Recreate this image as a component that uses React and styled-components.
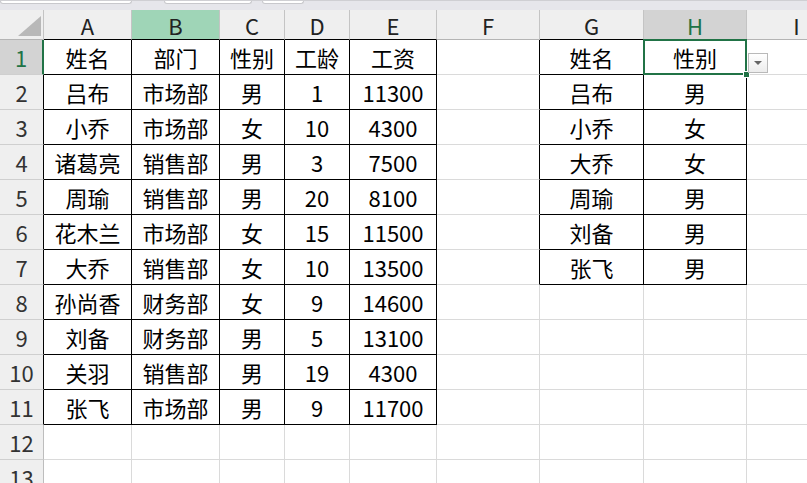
import styled, { createGlobalStyle } from "styled-components";

const GlobalStyle = createGlobalStyle`
  html, body {
    margin: 0;
    padding: 0;
    background: #fff;
    overflow: hidden;
  }
  body {
    font-family: "Noto Sans CJK SC", "Noto Sans", sans-serif;
  }
`;

const COLS = ["A", "B", "C", "D", "E", "F", "G", "H", "I"];
const WIDTHS = [88, 88, 65, 65, 87, 103, 104, 103, 100];
const GREEN = "#217346";
const GRID = "#dadada";

const main = [
  ["姓名", "部门", "性别", "工龄", "工资"],
  ["吕布", "市场部", "男", "1", "11300"],
  ["小乔", "市场部", "女", "10", "4300"],
  ["诸葛亮", "销售部", "男", "3", "7500"],
  ["周瑜", "销售部", "男", "20", "8100"],
  ["花木兰", "市场部", "女", "15", "11500"],
  ["大乔", "销售部", "女", "10", "13500"],
  ["孙尚香", "财务部", "女", "9", "14600"],
  ["刘备", "财务部", "男", "5", "13100"],
  ["关羽", "销售部", "男", "19", "4300"],
  ["张飞", "市场部", "男", "9", "11700"],
];

const lookup = [
  ["姓名", "性别"],
  ["吕布", "男"],
  ["小乔", "女"],
  ["大乔", "女"],
  ["周瑜", "男"],
  ["刘备", "男"],
  ["张飞", "男"],
];

// bordered ranges: [firstCol, lastCol, firstRow, lastRow] (0-based col, 1-based row)
const ranges = [
  [0, 4, 1, 11],
  [6, 7, 1, 7],
];

const inRange = (c, r) =>
  ranges.some(([c0, c1, r0, r1]) => c >= c0 && c <= c1 && r >= r0 && r <= r1);

const Page = styled.div`
  width: 807px;
  height: 483px;
  overflow: hidden;
  display: flex;
  flex-direction: column;
`;

const TopStrip = styled.div`
  height: 10px;
  flex: none;
  background: #e6e6eb;
  border-top: 1px solid #cfcfd3;
  box-sizing: border-box;
  display: flex;
  align-items: flex-start;
`;

const StripBox = styled.div`
  width: ${(p) => p.$w}px;
  margin-left: ${(p) => p.$ml || 0}px;
  height: 2px;
  background: #fff;
  border: 1px solid #c8c8cc;
  border-top: none;
  border-radius: 0 0 3px 3px;
`;

const Sheet = styled.div`
  display: grid;
  grid-template-columns: 44px ${WIDTHS.map((w) => w + "px").join(" ")};
  grid-template-rows: 30px;
  grid-auto-rows: 35px;
  width: max-content;
  font-size: 22px;
  color: #000;
`;

const Corner = styled.div`
  position: relative;
  background: #efefef;
  border-right: 1px solid #c4c4c4;
  border-bottom: 1px solid #b4b4b4;
  box-sizing: border-box;

  &::after {
    content: "";
    position: absolute;
    left: 18px;
    top: 6px;
    width: 23px;
    height: 20px;
    background: #b8b8b8;
    clip-path: polygon(100% 0, 100% 100%, 0 100%);
  }
`;

const ColHead = styled.div`
  display: flex;
  align-items: center;
  justify-content: center;
  box-sizing: border-box;
  background: ${(p) => (p.$active ? "#9fd5b7" : p.$current ? "#d3d3d3" : "#efefef")};
  color: ${(p) => (p.$current ? GREEN : "#222")};
  border-right: 1px solid #c4c4c4;
  border-bottom: 1px solid ${(p) => (p.$black ? "#000" : "#b4b4b4")};
  line-height: 1;
`;

const RowHead = styled.div`
  display: flex;
  align-items: center;
  justify-content: center;
  box-sizing: border-box;
  background: ${(p) => (p.$current ? "#d3d3d3" : "#efefef")};
  color: ${(p) => (p.$current ? GREEN : "#333")};
  border-bottom: 1px solid #cfcfcf;
  border-right: ${(p) =>
    p.$current ? `2px solid ${GREEN}` : `1px solid ${p.$black ? "#000" : "#bdbdbd"}`};
  line-height: 1;
`;

const Cell = styled.div`
  position: relative;
  display: flex;
  align-items: center;
  justify-content: center;
  box-sizing: border-box;
  white-space: nowrap;
  border-right: 1px solid ${(p) => (p.$right ? "#000" : GRID)};
  border-bottom: 1px solid ${(p) => (p.$bottom ? "#000" : GRID)};
  line-height: 1;

  ${(p) =>
    p.$selected &&
    `
    &::after {
      content: "";
      position: absolute;
      left: -1px;
      top: -1px;
      right: -1px;
      bottom: -1px;
      border: 2px solid ${GREEN};
      z-index: 2;
    }
    &::before {
      content: "";
      position: absolute;
      right: -4px;
      bottom: -4px;
      width: 5px;
      height: 5px;
      background: ${GREEN};
      border: 1px solid #fff;
      z-index: 3;
    }
  `}
`;

const DropButton = styled.div`
  position: absolute;
  left: 104px;
  top: 13px;
  width: 20px;
  height: 20px;
  box-sizing: border-box;
  border: 1px solid #b9b9b9;
  background: linear-gradient(#ffffff, #ececec);
  display: flex;
  align-items: center;
  justify-content: center;
  z-index: 4;

  &::after {
    content: "";
    border-left: 4px solid transparent;
    border-right: 4px solid transparent;
    border-top: 4px solid #666;
  }
`;

const valueAt = (c, r) => {
  if (c <= 4 && r <= 11) return main[r - 1][c];
  if (c >= 6 && c <= 7 && r <= 7) return lookup[r - 1][c - 6];
  return "";
};

export default function App() {
  const rows = Array.from({ length: 13 }, (_, i) => i + 1);
  return (
    <Page>
      <GlobalStyle />
      <TopStrip>
        <StripBox $w={130} />
        <StripBox $w={86} $ml={32} />
        <StripBox $w={40} $ml={10} />
      </TopStrip>
      <Sheet>
        <Corner />
        {COLS.map((col, c) => (
          <ColHead
            key={col}
            $active={col === "B"}
            $current={col === "H"}
            $black={inRange(c, 1)}
          >
            {col}
          </ColHead>
        ))}
        {rows.map((r) => [
          <RowHead key={"h" + r} $current={r === 1} $black={inRange(0, r)}>
            {r}
          </RowHead>,
          ...COLS.map((col, c) => {
            const selected = col === "H" && r === 1;
            return (
              <Cell
                key={col + r}
                $right={inRange(c, r) || inRange(c + 1, r)}
                $bottom={inRange(c, r) || inRange(c, r + 1)}
                $selected={selected}
              >
                {valueAt(c, r)}
                {selected && <DropButton />}
              </Cell>
            );
          }),
        ])}
      </Sheet>
    </Page>
  );
}
